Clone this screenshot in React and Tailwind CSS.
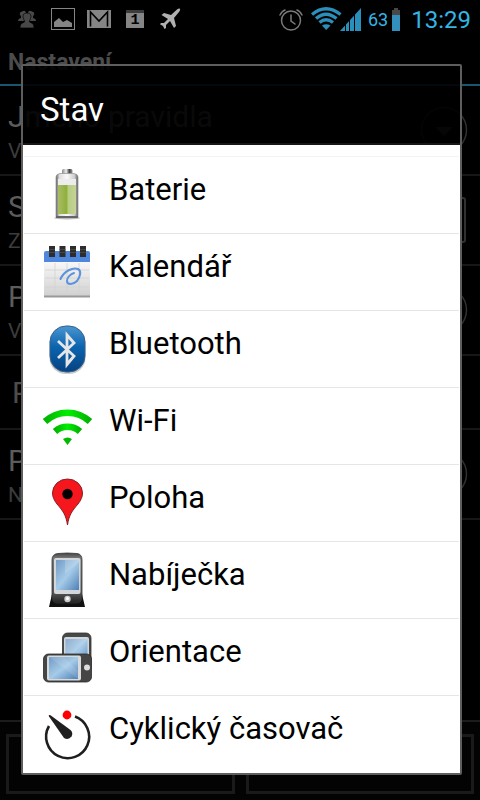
import React from "react";

const svg = "block h-[76px] w-16 shrink-0";

function Gradient({ id, stops, ...rest }) {
  return (
    <linearGradient id={id} {...rest}>
      {stops.map(([offset, color]) => (
        <stop key={offset} offset={offset} stopColor={color} />
      ))}
    </linearGradient>
  );
}

function BatteryIcon() {
  return (
    <svg className={svg} viewBox="0 0 64 76" aria-hidden="true">
      <defs>
        <Gradient id="metal" stops={[["0", "#555"], ["0.15", "#ddd"], ["0.5", "#fafafa"], ["0.85", "#ccc"], ["1", "#555"]]} />
        <Gradient id="charge" stops={[["0", "#a9bd63"], ["0.5", "#8fae3c"], ["0.55", "#b7cc83"], ["1", "#c3d494"]]} />
        <Gradient id="tip" stops={[["0", "#888"], ["0.4", "#eee"], ["0.7", "#444"], ["1", "#999"]]} />
      </defs>
      <ellipse cx="32" cy="61" rx="13" ry="1.5" fill="#bbb" />
      <rect x="27" y="12" width="10.5" height="8" rx="1.5" fill="url(#tip)" />
      <path d="M21 20q0-3 4-3.500h14q4 .5 4 3.500v40H21z" fill="url(#metal)" stroke="#9b9b9b" strokeWidth="0.8" />
      <rect x="23" y="22" width="18" height="7" fill="#ececec" />
      <rect x="23" y="28" width="18" height="29" fill="url(#charge)" />
      <path d="M21 59h22v2H21z" fill="#666" />
    </svg>
  );
}

function CalendarIcon() {
  return (
    <svg className={svg} viewBox="0 0 64 76" aria-hidden="true">
      <defs>
        <Gradient id="paper" x2="0" y2="1" stops={[["0", "#fafafa"], ["1", "#cfcfcf"]]} />
      </defs>
      <rect x="9" y="26" width="46" height="37" fill="url(#paper)" />
      <path d="M20 29v33M32 29v33M44 29v33M10 36h44M10 44h44M10 53h44" stroke="#d2d2d2" strokeWidth="0.800" />
      <path d="M9 61.500h46v2H9z" fill="#999" />
      <path d="M9 19q0-2 2-2h42q2 0 2 2v9H9z" fill="#4f87dc" />
      {[14, 24.5, 35, 45].map((x) => (
        <g key={x}>
          <rect x={x} y="12" width="6" height="11" fill="#2d2d2d" />
          <path d={`M${x} 15.500h6M${x} 18.500h6`} stroke="#555" strokeWidth="0.600" />
        </g>
      ))}
      <path d="M25.500 45C29 37 38 33 43 35c4 2 2 8-1 12-4 4-10 4-10 0 0-4 4-7 7-8" fill="none" stroke="#5b93df" strokeWidth="2" strokeLinecap="round" />
    </svg>
  );
}

function BluetoothIcon() {
  return (
    <svg className={svg} viewBox="0 0 64 76" aria-hidden="true">
      <defs>
        <Gradient id="blue" x2="0" y2="1" stops={[["0", "#4b96cf"], ["0.45", "#0b64b0"], ["1", "#07427f"]]} />
      </defs>
      <rect x="14.500" y="16" width="36" height="47" rx="16" fill="#ccc" />
      <rect x="15" y="15" width="35" height="46" rx="16" fill="url(#blue)" stroke="#37618c" strokeWidth="1" />
      <path d="M23 30l16 15-7 8.500V24l7 8-16 15" fill="none" stroke="#e6e6e6" strokeWidth="2.800" />
    </svg>
  );
}

function WifiIcon() {
  return (
    <svg className={svg} viewBox="0 0 64 76" aria-hidden="true">
      <defs>
        <Gradient id="green" stops={[["0", "#00b400"], ["0.5", "#00ee00"], ["1", "#00b400"]]} />
      </defs>
      <path d="M10 33.500A33 33 0 0 1 55 33.500" fill="none" stroke="url(#green)" strokeWidth="6.500" />
      <path d="M20 43.500A19 19 0 0 1 45 43.500" fill="none" stroke="url(#green)" strokeWidth="6.500" />
      <path d="M28 51q4.500-3 9 0l-4.500 6z" fill="#0b0" />
    </svg>
  );
}

function PinIcon() {
  return (
    <svg className={svg} viewBox="0 0 64 76" aria-hidden="true">
      <path d="M32.500 60C31 50 28 46 22 39c-3-4-4.500-7-4.500-11a15 14 0 0 1 30 0c0 4-1.500 7-4.500 11-6 7-9 11-10.500 21z" fill="#f6161d" stroke="#862023" strokeWidth="1" />
      <circle cx="32.500" cy="29" r="5.200" fill="#000" />
    </svg>
  );
}

function DockIcon() {
  return (
    <svg className={svg} viewBox="0 0 64 76" aria-hidden="true">
      <defs>
        <Gradient id="screen" x2="1" y2="1" stops={[["0", "#7299c4"], ["0.5", "#a5cbe8"], ["1", "#4e7fb5"]]} />
        <Gradient id="shell" x2="0" y2="1" stops={[["0", "#444"], ["0.1", "#777"], ["0.8", "#555"], ["1", "#222"]]} />
      </defs>
      <path d="M17 52h30l3 13H14z" fill="#111" />
      <path d="M17 18q0-6 6-6.500 9-1 19 0 5 .5 5 6.500v37q0 6-6 6H23q-6 0-6-6z" fill="url(#shell)" stroke="#333" strokeWidth="0.800" />
      <rect x="19" y="16" width="26.500" height="36" rx="2" fill="#d4d7da" />
      <rect x="21" y="18" width="23" height="30" fill="url(#screen)" />
      <path d="M44 18v2L30 32V18z" fill="#fff" opacity="0.180" />
      <circle cx="32.500" cy="57" r="3.200" fill="#ccc" />
      <circle cx="32.500" cy="56.500" r="1.500" fill="#fff" />
    </svg>
  );
}

function OrientationIcon() {
  return (
    <svg className={svg} viewBox="0 0 64 76" aria-hidden="true">
      <rect x="27.500" y="14" width="28.500" height="40" rx="5" fill="#484848" stroke="#333" strokeWidth="0.800" />
      <rect x="29" y="18" width="25" height="30" rx="2" fill="#d4d7da" />
      <rect x="30.500" y="20" width="22" height="28" fill="url(#screen)" />
      <path d="M52.500 20L38 35h-7.500V20z" fill="#fff" opacity="0.200" />
      <rect x="8.500" y="35" width="48" height="28" rx="5" fill="#454545" stroke="#2b2b2b" strokeWidth="0.800" />
      <rect x="12" y="36.500" width="34" height="25" rx="2" fill="#d8dadc" />
      <rect x="14" y="38" width="29" height="22" fill="url(#screen)" />
      <path d="M14 38h15L43 52v8z" fill="#fff" opacity="0.120" />
      <circle cx="52" cy="48.500" r="3" fill="#ddd" />
    </svg>
  );
}

function TimerIcon() {
  return (
    <svg className={svg} viewBox="0 0 64 76" aria-hidden="true">
      <path d="M40 20.500A21.500 21.500 0 1 1 14 30" fill="none" stroke="#1f1f1f" strokeWidth="2.600" />
      <path d="M14 20.500q-1-2 1.500-1.200L35.500 34q3 3 1 6.500-3 4-7.500 1.500z" fill="#1f1f1f" />
      <circle cx="32" cy="19" r="4.400" fill="#f00" />
    </svg>
  );
}

const items = [
  ["Baterie", BatteryIcon],
  ["Kalendář", CalendarIcon],
  ["Bluetooth", BluetoothIcon],
  ["Wi-Fi", WifiIcon],
  ["Poloha", PinIcon],
  ["Nabíječka", DockIcon],
  ["Orientace", OrientationIcon],
  ["Cyklický časovač", TimerIcon],
];

function StatusBar() {
  return (
    <div className="flex h-[38px] items-center justify-between pr-[9px] pl-[18px]">
      <div className="flex items-center">
        <svg className="mr-[15px] h-6 w-[18px]" viewBox="0 0 18 24" fill="#484848" aria-hidden="true">
          <path d="M4 4.500q3-2 4 1v5l1.500 1.500L8 14H0q0-2.500 3-3V9.500Q1 7 2 5.500zM14 4.500q-3-2-4 1v5L8.500 12l1.500 2h8q0-2.500-3-3V9.500q2-2.500 1-4z" />
          <path d="M9 6c4 0 4.500 3 3.500 5.500-.5 1.500-1 2-1 3.500l3 1.500q1.500.8 1.500 4.500H2q0-3.700 1.500-4.500l3-1.500c0-1.500-.5-2-1-3.500C4.500 9 5 6 9 6z" stroke="#000" strokeWidth="0.700" />
        </svg>
        <svg className="mr-3 h-6 w-6" viewBox="0 0 24 24" aria-hidden="true">
          <rect x="0.500" y="1.500" width="23" height="21" fill="none" stroke="#858585" />
          <path d="M3 20v-5l5-4 4 4 4-2 5 3v4z" fill="#858585" />
        </svg>
        <svg className="mr-[15px] h-6 w-6" viewBox="0 0 24 24" aria-hidden="true">
          <rect y="3" width="24" height="18" fill="#858585" />
          <path d="M3.500 19.500V5l8.500 9 8.500-9v14.500" fill="none" stroke="#000" strokeWidth="1.600" />
          <path d="M4 3l8 8 8-8z" fill="#858585" />
        </svg>
        <div className="mr-4 h-[18px] w-[18px] border-t-[3px] border-[#3c3c3c] bg-[#858585] text-center font-['Liberation_Mono'] text-[15px] leading-[15px] font-bold text-black">1</div>
        <svg className="h-6 w-[21px]" viewBox="0 0 21 24" fill="#b0b0b0" aria-hidden="true">
          <path d="M1.500 8L4 6l7 2 6-5.500q2-1.500 3-.7.700 1-.8 2.900L14 11l2 8-2 2-4-7-4 4v3l-1.500 1L3 19l-3-1.800L1 16h3l4-4z" />
        </svg>
      </div>
      <div className="flex items-center text-[#33b5e5]">
        <svg className="mr-2 h-6 w-6" viewBox="0 0 24 24" fill="none" stroke="#7b7b7b" strokeWidth="1.500" strokeLinecap="round" aria-hidden="true">
          <circle cx="12" cy="13.500" r="9.500" />
          <path d="M12 8v6l4 3M1 8Q3 4 6 3M23 8Q21 4 18 3" />
        </svg>
        <svg className="h-6 w-[50px]" viewBox="0 0 50 24" fill="none" stroke="#2a8fba" aria-hidden="true">
          <path d="M1 7.500Q15 -4 29.500 7.500M5 11.500Q15 3 25.500 11.500M8.500 15.500Q15 10 22 15.500" strokeWidth="3.300" />
          <path d="M11 18.500Q15 16 19.500 18.500L15.200 23z" fill="#2a8fba" stroke="none" />
          <path d="M29 24L50 1v23z" fill="#2a8fba" stroke="none" />
          <path d="M34.500 24V10M38.500 24V8M43.500 24V4" stroke="#000" strokeWidth="1" />
        </svg>
        <span className="mr-1 ml-[7px] pt-[2px] text-lg leading-6">63</span>
        <svg className="mr-[11px] h-6 w-2" viewBox="0 0 8 24" aria-hidden="true">
          <path d="M2 1h4v2h2v6H0V3h2z" fill="#484848" />
          <path d="M0 8h8v16H0z" fill="#3390bd" />
        </svg>
        <span className="pt-[2px] text-2xl leading-7">13:29</span>
      </div>
    </div>
  );
}

function Round() {
  return (
    <svg className="h-12 w-12" viewBox="0 0 48 48" aria-hidden="true">
      <circle cx="24" cy="24" r="22.500" fill="none" stroke="#303030" strokeWidth="1.500" />
      <path d="M15 21h18l-9 9z" fill="#3c3c3c" />
    </svg>
  );
}

function Setting({ title, note, children }) {
  return (
    <div className="flex h-[90px] justify-between border-b-2 border-[#171717] pr-3 pl-2 text-[#5c5c5c]">
      <div className="pt-[13px]">
        <div className="text-[30px] leading-9">{title}</div>
        <div className="text-[21px] leading-8 text-[#3c3c3c]">{note}</div>
      </div>
      <div className="flex items-center">{children}</div>
    </div>
  );
}

export default function App() {
  return (
    <div className="relative flex min-h-screen flex-col bg-black font-[Roboto,'Noto_Sans',sans-serif]">
      <StatusBar />
      <h1 className="h-12 border-b-2 border-[#1a566f] pt-3 pl-2 text-[23px] leading-[26px] font-bold text-[#4c4c4c]">Nastavení</h1>
      <div className="flex-1">
        <Setting title="Jméno pravidla" note="V"><Round /></Setting>
        <Setting title="S" note="Z"><div className="mr-[2px] h-[46px] w-[46px] rounded-[3px] border-2 border-[#303030]" /></Setting>
        <Setting title="P" note="V"><Round /></Setting>
        <div className="h-[74px] border-b-2 border-[#171717] pt-[19px] pl-3 text-[30px] leading-9 text-[#4c4c4c]">P</div>
        <Setting title="P" note="N"><Round /></Setting>
      </div>
      <div className="flex h-20 gap-[11px] border-t-2 border-[#1c1c1c] bg-[#030303] px-[6px] pt-3 pb-[6px]">
        <button type="button" aria-label="Uložit" className="flex-1 border-[3px] border-[#1a1a1a]" />
        <button type="button" aria-label="Zrušit" className="flex-1 border-[3px] border-[#1a1a1a]" />
      </div>

      <div role="dialog" aria-labelledby="dialog-title" className="absolute top-16 right-[18px] left-[21px] rounded-[2px] border-2 border-[#5e5e5e]">
        <h2 id="dialog-title" className="h-[79px] border-b-2 border-[#171717] bg-black/90 pt-6 pl-[17px] text-[33px] leading-10 text-white">Stav</h2>
        <ul className="bg-white px-px pt-[11px] pb-px text-black">
          {items.map(([label, Icon]) => (
            <li key={label} className="border-t border-[#e6e6e6] first:border-[#f3f3f3]">
              <button type="button" className="flex h-[76px] w-full items-start gap-[10px] pl-[11px] text-left">
                <Icon />
                <span className="pt-[15px] text-[31px] leading-9">{label}</span>
              </button>
            </li>
          ))}
        </ul>
      </div>
    </div>
  );
}
